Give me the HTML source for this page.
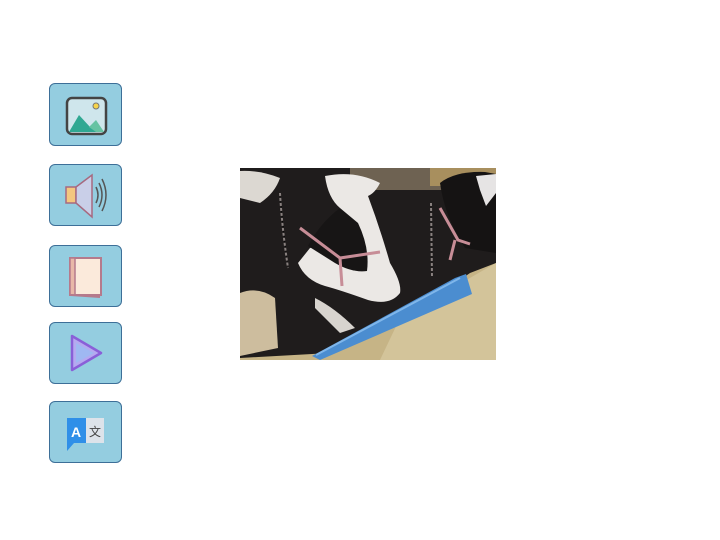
<!DOCTYPE html>
<html><head><meta charset="utf-8"><style>
html,body{margin:0;padding:0;background:#fff;width:720px;height:540px;overflow:hidden}
.b{position:absolute;left:49px;width:73px;background:#94cde0;border:1px solid #3d6f98;border-radius:6px;box-sizing:border-box}
.b svg{position:absolute;left:0;top:0}
</style></head><body>
<div class="b" style="top:83px;height:63px"><svg width="73" height="63"><rect x="17" y="14" width="39" height="36" rx="5" fill="#cfe6ec" stroke="#444" stroke-width="2.5"/><path d="M19 48 L29 31 L40 43 L46 37 L54 48Z" fill="#2fa892"/><path d="M39 43 L46 36 L54 48 L46 48Z" fill="#66c3a2"/><circle cx="46" cy="22" r="3" fill="#f7d44a" stroke="#777"/></svg></div>
<div class="b" style="top:164px;height:62px"><svg width="73" height="62"><rect x="16" y="22" width="10" height="16" fill="#f4c77f" stroke="#a76a80" stroke-width="1.5"/><path d="M26 22 L42 10 L42 52 L26 38Z" fill="#c9cfe8" stroke="#a76a80" stroke-width="1.5"/><path d="M46 22 Q50 30 46 38 M49 18 Q55 30 49 42 M52 14 Q60 30 52 46" fill="none" stroke="#555" stroke-width="1.5"/></svg></div>
<div class="b" style="top:245px;height:62px"><svg width="73" height="62"><rect x="20" y="12" width="31" height="37" fill="#fbeadb" stroke="#b57a8c" stroke-width="2"/><rect x="20" y="12" width="5" height="37" fill="#e8b8a8" stroke="#b57a8c" stroke-width="1.5"/><line x1="21" y1="49" x2="50" y2="51" stroke="#b57a8c" stroke-width="2"/></svg></div>
<div class="b" style="top:322px;height:62px"><svg width="73" height="62"><path d="M22 13 L51 30 L22 47Z" fill="#b5a9f0" stroke="#8a5fd8" stroke-width="2.5" stroke-linejoin="round"/><path d="M26 20 L44 30 L26 40Z" fill="#9fb8f2"/></svg></div>
<div class="b" style="top:401px;height:62px"><svg width="73" height="62"><rect x="34" y="16" width="20" height="25" fill="#dde3ea"/><path d="M17 16 L36 16 L36 41 L24 41 L17 49Z" fill="#2f8fe8"/><text x="21" y="35" font-family="Liberation Sans,sans-serif" font-weight="bold" font-size="14" fill="#fff">A</text><text x="39" y="34" font-family="Noto Sans CJK SC,sans-serif" font-size="12" fill="#444">文</text></svg></div>
<svg style="position:absolute;left:240px;top:168px" width="256" height="192" viewBox="0 0 256 192">
<rect width="256" height="192" fill="#1f1c1c"/>
<rect x="110" y="0" width="146" height="22" fill="#6e6252"/>
<rect x="190" y="0" width="66" height="18" fill="#a88f5e"/>
<path d="M200 15 Q215 3 245 4 L256 6 L256 85 L225 80 Q205 50 200 15Z" fill="#151313"/>
<path d="M236 8 L256 6 L256 25 L246 38 L240 22Z" fill="#e6e4e4"/>
<path d="M0 3 Q20 2 40 10 Q35 25 20 35 L0 30Z" fill="#dcd8d2"/>
<path d="M85 8 Q115 2 140 15 Q135 25 128 28 Q140 60 150 95 Q162 115 160 125 Q150 138 128 132 Q100 122 85 118 Q65 112 58 95 L70 80 Q80 78 85 72 Q95 55 100 40 Q88 30 85 8Z" fill="#ebe8e5"/>
<path d="M100 40 Q80 55 68 78 L95 95 Q112 105 127 103 Q130 80 118 55Z" fill="#171515"/>
<path d="M60 60 L100 90 L140 84 M100 90 L102 118" fill="none" stroke="#c78d97" stroke-width="3"/>
<path d="M200 40 L218 72 L230 76 M215 72 L210 92" fill="none" stroke="#c78d97" stroke-width="3"/>
<path d="M75 130 Q95 140 115 160 L100 165 Q85 150 75 140Z" fill="#d8d4cf"/>
<path d="M0 125 Q18 118 35 130 L38 180 L0 188Z" fill="#cdbd9e"/>
<path d="M0 190 L90 185 L180 140 L230 105 L256 95 L256 192 L0 192Z" fill="#c6b486"/>
<path d="M160 150 L256 95 L256 192 L140 192Z" fill="#d3c49a"/>
<path d="M72 188 L215 110 L226 106 L232 126 L80 192Z" fill="#4b8dd0"/>
<path d="M76 187 L220 110" stroke="#7fb6ea" stroke-width="2"/>
<path d="M40 25 Q42 60 48 100 M191 35 L192 110" stroke="#8a8280" stroke-width="2" stroke-dasharray="3 2"/>
</svg>
</body></html>
